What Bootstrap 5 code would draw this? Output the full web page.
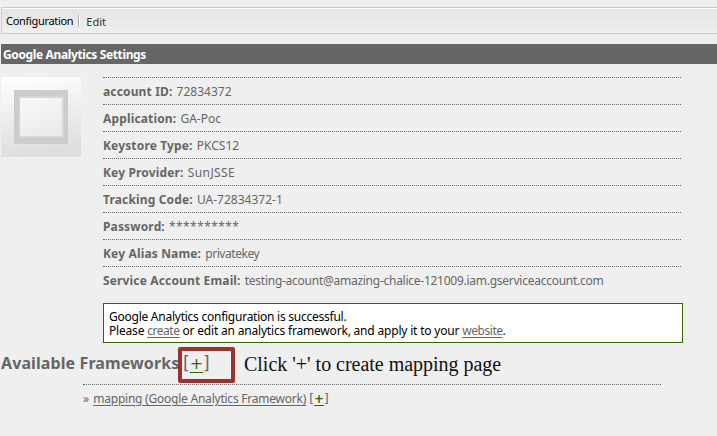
<!DOCTYPE html>
<html lang="en">
<head>
<meta charset="utf-8">
<meta name="viewport" content="width=device-width, initial-scale=1">
<title>Google Analytics Settings</title>
<link href="https://cdn.jsdelivr.net/npm/bootstrap@5.3.0/dist/css/bootstrap.min.css" rel="stylesheet">
<style>
body{background:#efefef;color:#666;font:12px/14px "Noto Sans",sans-serif;overflow:hidden;height:436px}
a{color:#666;text-underline-offset:2px}
a:hover{color:#333}
a.plus{color:#360}
.tabs{margin:7px 0 10px 1px;height:27px;border:1px solid #ccc;border-right:0;box-shadow:inset 0 1px #fff;background:linear-gradient(#e3e3e3,#efefef)}
.tabs .nav-link{font-size:11px;line-height:14px;padding:0;color:#333}
.tabs .nav-link.active{color:#000;margin:6px 5px 0 4px;letter-spacing:-.31px}
.tabs .edit-tab{margin:7px 0 0 6px}
.divider{width:2px;height:12px;margin-top:7px;background:#aca899;border-right:1px solid #fff}
.title{margin-left:1px;height:20px;padding-left:2px;line-height:21px;font-size:12px;letter-spacing:-.37px;background:#666;color:#fff}
.settings{margin:13px 0 0 1px}
.thumb{width:80px;height:80px;margin-right:22px}
.details{width:578px}
.details li{height:27px;padding-top:7px;border-top:1px dotted #666;white-space:nowrap}
.details b{letter-spacing:.15px;margin-right:1px}
.wide{letter-spacing:.42px}
.narrow{letter-spacing:-.45px}
.email{letter-spacing:-.26px}
.notice{width:580px;height:40px;margin:10px 0 0 103px;padding:6px 5px;border:1px solid #360;background:#fff;color:#000;letter-spacing:-.19px}
.notice span{letter-spacing:-.25px}
.notice a{letter-spacing:-.45px}
.frameworks{height:41px;padding-left:1px}
.frameworks h2{font-size:16px;line-height:20px;width:177px;margin:10px 0 0;letter-spacing:.1px;white-space:nowrap}
.callout{width:57px;height:36px;margin-top:4px;border:4px solid #933;border-radius:2px;padding:3px 0 0 1px;font:17px/18px "DejaVu Sans",sans-serif;white-space:nowrap}
.callout a{font-size:16px;text-underline-offset:3px}
.hint{font:20px/24px "Liberation Serif",serif;color:#111;margin:9px 0 0 9px;letter-spacing:-.02px;white-space:nowrap}
.mapping{width:578px;margin-left:83px;border-top:1px dotted #666;padding-top:7px}
.mapping .name{letter-spacing:-.23px;margin-left:1px}
.add{font:12px/14px "DejaVu Sans",sans-serif}
</style>
</head>
<body>
<nav class="nav tabs flex-nowrap">
<a class="nav-link active" href="#">Configuration</a><span class="divider"></span><a class="nav-link edit-tab" href="#">Edit</a>
</nav>
<h1 class="title fw-bold mb-0">Google Analytics Settings</h1>
<main>
<section class="settings d-flex">
<svg class="thumb flex-shrink-0" viewBox="0 0 80 80" aria-hidden="true"><defs><linearGradient id="g" x2=".15" y2="1"><stop stop-color="#fff"/><stop offset="1" stop-color="#dedede"/></linearGradient><linearGradient id="inner" x2=".5" y2="1"><stop stop-color="#f9f9f9"/><stop offset="1" stop-color="#ebebeb"/></linearGradient></defs><path fill="url(#g)" d="M0 0h80v80H0z"/><path fill="#ccc" d="M13 13h54v54H13z"/><path fill="#d7d7d7" d="M18 19h45v42H18z"/><path fill="url(#inner)" d="M19 21h42v38H19z"/></svg>
<ul class="details list-unstyled mb-0">
<li><b>account ID:</b> <span>72834372</span></li>
<li><b>Application:</b> <span>GA-Poc</span></li>
<li><b>Keystore Type:</b> <span>PKCS12</span></li>
<li><b>Key Provider:</b> <span class="wide">SunJSSE</span></li>
<li><b>Tracking Code:</b> <span>UA-72834372-1</span></li>
<li><b>Password:</b> <span class="wide">**********</span></li>
<li><b>Key Alias Name:</b> <span class="narrow">privatekey</span></li>
<li><b>Service Account Email:</b> <span class="email">testing-acount@amazing-chalice-121009.iam.gserviceaccount.com</span></li>
</ul>
</section>
<div class="notice"><span>Google Analytics configuration is successful.</span><br>Please <a href="#">create</a> or edit an analytics framework, and apply it to your <a href="#">website</a>.</div>
<section class="frameworks d-flex">
<h2 class="fw-bold">Available Frameworks</h2>
<div class="callout">[<a class="plus" href="#">+</a>]</div>
<div class="hint">Click '+' to create mapping page</div>
</section>
<div class="mapping">» <a class="name" href="#">mapping (Google Analytics Framework)</a> <span class="add">[<a class="plus fw-bold" href="#">+</a>]</span></div>
</main>
<script src="https://cdn.jsdelivr.net/npm/bootstrap@5.3.0/dist/js/bootstrap.bundle.min.js"></script>
</body>
</html>
